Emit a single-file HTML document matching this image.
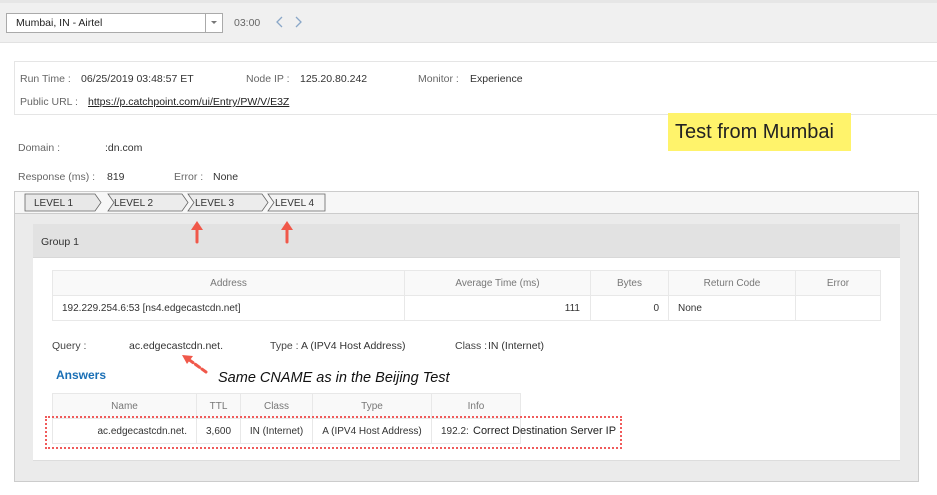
<!DOCTYPE html>
<html><head><style>
*{box-sizing:border-box;margin:0;padding:0}
body{width:937px;height:495px;background:#fff;font-family:"Liberation Sans",Arial,sans-serif;font-size:10.5px;color:#333;position:relative;overflow:hidden}
.a{position:absolute}
.lbl{color:#666}
table{border-collapse:collapse;position:absolute;background:#fff}
td,th{border:1px solid #e8e8e8;font-weight:normal;font-size:10px}
th{background:#f9f9f9;color:#777;height:25px}
td{height:25px;color:#333}
</style></head><body>
<div class="a" style="left:0;top:0;width:937px;height:3px;background:#e6e6e6"></div>
<div class="a" style="left:0;top:3px;width:937px;height:40px;background:#f0f0f0;border-bottom:1px solid #e2e2e2"></div>
<div class="a" style="left:6px;top:13px;width:217px;height:20px;background:#fff;border:1px solid #aaa"></div>
<div class="a" style="left:205px;top:13px;width:1px;height:20px;background:#aaa"></div>
<div class="a" style="left:211px;top:21px;border-left:3px solid transparent;border-right:3px solid transparent;border-top:3px solid #777"></div>
<div class="a" style="left:16px;top:17px;color:#222">Mumbai, IN - Airtel</div>
<div class="a" style="left:234px;top:17px;color:#666">03:00</div>
<svg class="a" style="left:274px;top:15px" width="30" height="14"><path d="M8 2 L3 7 L8 12" fill="none" stroke="#8aa7c8" stroke-width="1.3"/><path d="M22 2 L27 7 L22 12" fill="none" stroke="#8aa7c8" stroke-width="1.3"/></svg>

<div class="a" style="left:14px;top:61px;width:930px;height:54px;border:1px solid #e5e5e5"></div>
<div class="a lbl" style="left:20px;top:73px">Run Time :</div>
<div class="a" style="left:81px;top:73px">06/25/2019 03:48:57 ET</div>
<div class="a lbl" style="left:246px;top:73px">Node IP :</div>
<div class="a" style="left:300px;top:73px">125.20.80.242</div>
<div class="a lbl" style="left:418px;top:73px">Monitor :</div>
<div class="a" style="left:470px;top:73px">Experience</div>
<div class="a lbl" style="left:20px;top:96px">Public URL :</div>
<div class="a" style="left:88px;top:96px;text-decoration:underline;color:#222">https://p.catchpoint.com/ui/Entry/PW/V/E3Z</div>

<div class="a" style="left:668px;top:113px;width:183px;height:38px;background:#fff36b"></div>
<div class="a" style="left:675px;top:121px;font-size:20px;color:#222">Test from Mumbai</div>

<div class="a lbl" style="left:18px;top:142px">Domain :</div>
<div class="a" style="left:105px;top:142px">:dn.com</div>
<div class="a lbl" style="left:18px;top:171px">Response (ms) :</div>
<div class="a" style="left:107px;top:171px">819</div>
<div class="a lbl" style="left:174px;top:171px">Error :</div>
<div class="a" style="left:213px;top:171px">None</div>

<div class="a" style="left:14px;top:191px;width:905px;height:291px;background:#ebebeb;border:1px solid #ccc"></div>
<div class="a" style="left:15px;top:192px;width:903px;height:22px;background:#f7f7f7;border-bottom:1px solid #ccc"></div>
<svg class="a" style="left:22px;top:193px" width="310" height="20">
<g fill="#ececec" stroke="#666" stroke-width="0.8">
<path d="M246 1 H303 V18 H246 L252 9.5 Z" fill="#f4f4f4"/>
<path d="M166 1 H240 L246 9.5 L240 18 H166 L172 9.5 Z"/>
<path d="M86 1 H160 L166 9.5 L160 18 H86 L92 9.5 Z"/>
<path d="M3 1 H73 L79 9.5 L73 18 H3 Z" fill="#e8e8e8"/>
</g>
<g font-family="Liberation Sans" font-size="10" fill="#333">
<text x="12" y="13">LEVEL 1</text><text x="92" y="13">LEVEL 2</text><text x="173" y="13">LEVEL 3</text><text x="253" y="13">LEVEL 4</text></g>
</svg>

<div class="a" style="left:33px;top:224px;width:867px;height:34px;background:#e2e2e2;border-bottom:1px solid #d8d8d8"></div>
<div class="a" style="left:41px;top:236px;color:#333">Group 1</div>
<div class="a" style="left:33px;top:258px;width:867px;height:203px;background:#fff;border-bottom:1px solid #ddd"></div>

<table style="left:52px;top:270px;width:829px">
<tr><th style="width:352px">Address</th><th style="width:186px">Average Time (ms)</th><th style="width:78px">Bytes</th><th style="width:127px">Return Code</th><th>Error</th></tr>
<tr><td style="padding-left:9px">192.229.254.6:53 [ns4.edgecastcdn.net]</td><td style="text-align:right;padding-right:10px">111</td><td style="text-align:right;padding-right:9px">0</td><td style="padding-left:9px">None</td><td></td></tr>
</table>

<div class="a" style="left:52px;top:340px;color:#444">Query :</div>
<div class="a" style="left:129px;top:340px">ac.edgecastcdn.net.</div>
<div class="a" style="left:270px;top:340px;color:#444">Type :</div>
<div class="a" style="left:301px;top:340px">A (IPV4 Host Address)</div>
<div class="a" style="left:455px;top:340px;color:#444">Class :</div>
<div class="a" style="left:488px;top:340px">IN (Internet)</div>
<div class="a" style="left:56px;top:368px;font-size:12px;font-weight:bold;color:#1a6fb5">Answers</div>
<div class="a" style="left:218px;top:370px;font-size:14.5px;font-style:italic;color:#111">Same CNAME as in the Beijing Test</div>

<table style="left:52px;top:393px;width:469px">
<tr><th style="width:144px">Name</th><th style="width:44px">TTL</th><th style="width:72px">Class</th><th style="width:119px">Type</th><th>Info</th></tr>
<tr><td style="text-align:right;padding-right:9px">ac.edgecastcdn.net.</td><td style="text-align:center">3,600</td><td style="text-align:center">IN (Internet)</td><td style="text-align:center">A (IPV4 Host Address)</td><td style="padding-left:9px;white-space:nowrap;overflow:hidden">192.2:</td></tr>
</table>
<div class="a" style="left:473px;top:425px;font-size:11px;color:#222">Correct Destination Server IP</div>
<div class="a" style="left:45px;top:416px;width:577px;height:33px;border:2px dotted #f05a5a"></div>

<svg class="a" style="left:0;top:0" width="937" height="495">
<g stroke="#f0584a" stroke-width="3" fill="#f0584a" stroke-linecap="round">
<line x1="197" y1="242" x2="197" y2="226"/><path d="M191 230 L197 221 L203 230 Z" stroke="none"/>
<line x1="287" y1="242" x2="287" y2="226"/><path d="M281 230 L287 221 L293 230 Z" stroke="none"/>
<line x1="206" y1="372" x2="188" y2="359" stroke-dasharray="5 3"/><path d="M182 355 L193 356 L187 364 Z" stroke="none"/>
</g></svg>
</body></html>
